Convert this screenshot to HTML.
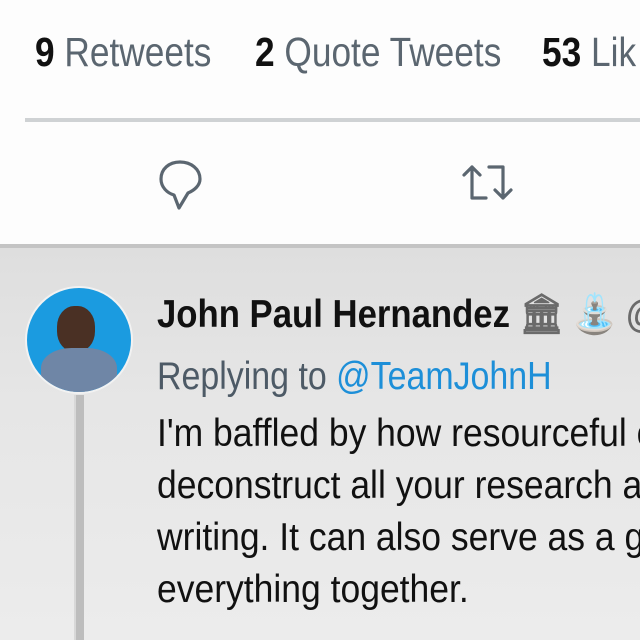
<!DOCTYPE html>
<html><head><style>
html,body{margin:0;width:640px;height:640px;overflow:hidden}
body{position:relative;font-family:"Liberation Sans",sans-serif;background:#fff}
#w{position:absolute;left:0;top:0;width:640px;height:640px;overflow:hidden}
.t{position:absolute;white-space:nowrap;transform-origin:0 0;line-height:1}
</style></head><body><div id="w">
<div style="position:absolute;left:0;top:0;width:640px;height:245px;background:#fdfdfd"></div>
<div class="t" style="left:35px;top:32px;font-size:41px;color:#5b6670;transform:scaleX(.86)"><b style="color:#111">9</b> Retweets</div>
<div class="t" style="left:255px;top:32px;font-size:41px;color:#5b6670;transform:scaleX(.86)"><b style="color:#111">2</b> Quote Tweets</div>
<div class="t" style="left:542px;top:32px;font-size:41px;color:#5b6670;transform:scaleX(.86)"><b style="color:#111">53</b> Lik</div>
<div style="position:absolute;left:25px;top:118px;width:615px;height:4px;background:#cfd2d4"></div>
<svg style="position:absolute;left:150px;top:150px" width="60" height="70" viewBox="0 0 60 70"><path d="M30 12c-11 0-19 7-19 17 0 8 6 14 13 16l5 13 9-15c7-3 12-8 12-14 0-10-9-17-20-17z" fill="none" stroke="#5b6670" stroke-width="3.2" stroke-linejoin="round"/></svg>
<svg style="position:absolute;left:455px;top:150px" width="65" height="70" viewBox="0 0 65 70"><g fill="none" stroke="#5b6670" stroke-width="3.2" stroke-linejoin="round" stroke-linecap="round"><path d="M17 48V17M9 25l8-8 8 8M17 48h14"/><path d="M48 17v31M40 40l8 8 8-8M48 17H34"/></g></svg>
<div style="position:absolute;left:0;top:245px;width:640px;height:395px;background:linear-gradient(180deg,#dedede,#e6e6e6 40%,#ececec)"></div>
<div style="position:absolute;left:0;top:244px;width:640px;height:4px;background:#c4c4c4"></div>
<div style="position:absolute;left:74px;top:395px;width:8px;height:245px;background:#bdbdbd;border-left:2px solid #d8d8d8"></div>
<div style="position:absolute;left:25px;top:286px;width:104px;height:104px;border-radius:50%;background:#1b9be0;border:2px solid #f2f2f2;overflow:hidden">
<div style="position:absolute;left:30px;top:18px;width:38px;height:46px;border-radius:45%;background:#4a3024"></div>
<div style="position:absolute;left:14px;top:60px;width:76px;height:50px;border-radius:40% 40% 0 0;background:#6f86a6"></div></div>
<div class="t" style="left:157px;top:295px;font-size:39px;font-weight:bold;color:#111;transform:scaleX(.89)">John Paul Hernandez <span style="color:#6a6a6a">🏛 ⛲ @</span></div>
<div class="t" style="left:157px;top:357px;font-size:39px;color:#4d5a66;transform:scaleX(.87)">Replying to <span style="color:#1d8fd8">@TeamJohnH</span></div>
<div class="t" style="left:157px;top:408px;font-size:39px;color:#111;line-height:52px;transform:scaleX(.91)">I'm baffled by how resourceful c<br>deconstruct all your research a<br>writing. It can also serve as a g<br>everything together.</div>
</div></body></html>
